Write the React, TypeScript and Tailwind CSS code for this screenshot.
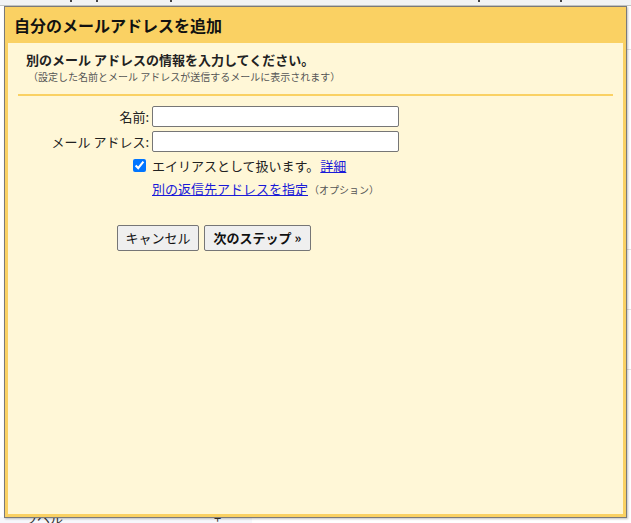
import React from 'react';

const font = { fontFamily: '"Noto Sans CJK JP", "Noto Sans", sans-serif' };

const Backdrop: React.FC = () => (
  <>
    <div className="absolute left-0 top-0 w-full h-[6px] bg-[#f1f3f4] border-b border-[#c4c7c5]">
      <span className="absolute left-[70px] top-[-2px] w-[2px] h-[4px] bg-[#444]" />
      <span className="absolute left-[96px] top-[-2px] w-[2px] h-[4px] bg-[#444]" />
      <span className="absolute left-[170px] top-[-2px] w-[2px] h-[4px] bg-[#444]" />
      <span className="absolute left-[478px] top-[-2px] w-[2px] h-[4px] bg-[#444]" />
      <span className="absolute left-[560px] top-[-2px] w-[2px] h-[4px] bg-[#444]" />
    </div>
    <div className="absolute right-0 top-[6px] w-[5px] h-[517px] bg-white">
      <div className="h-[44px] border-b border-[#e3e3e3]" />
      <div className="h-[200px] border-b border-[#e3e3e3]" />
      <div className="h-[60px] border-b border-[#e3e3e3]" />
      <div className="h-[60px] border-b border-[#e3e3e3]" />
    </div>
    <div className="absolute left-0 bottom-0 w-full h-[6px] bg-white">
      <div className="absolute left-0 top-0 w-[252px] h-full bg-[#f6f8fc]" />
      <span className="absolute left-[24px] top-[-6px] text-[13px] text-[#333] leading-none">ラベル</span>
      <span className="absolute left-[214px] top-[-6px] text-[13px] text-[#333] leading-none">+</span>
    </div>
  </>
);

export default function App() {
  return (
    <div className="relative w-[631px] h-[523px] bg-white overflow-hidden" style={font}>
      <Backdrop />
      <div className="absolute left-[4px] top-[6px] w-[623px] h-[512px] border border-[#7a7a7a] bg-[#fad163] flex flex-col pl-[3px] pr-[3px] pb-[3px] shadow-[1px_1px_2px_rgba(0,0,0,0.25)]">
        <div className="h-[36px] flex items-center pl-[6px] pb-[1px]">
          <h1 className="text-[16px] font-bold text-[#111] leading-none">自分のメールアドレスを追加</h1>
        </div>
        <div className="flex-1 bg-[#fff7d7] flex flex-col">
          <div className="pl-[18px] pt-[8px]">
            <p className="text-[13px] font-bold text-[#222] leading-[18px]">別のメール アドレスの情報を入力してください。</p>
            <p className="text-[10px] text-[#555] leading-[14px] mt-[1px] pl-[2px]">（設定した名前とメール アドレスが送信するメールに表示されます）</p>
          </div>
          <div className="mx-[10px] mt-[10px] h-[2px] bg-[#fad163]" />

          <div className="flex flex-col mt-[10px] text-[13px] text-[#222]">
            <div className="flex items-center h-[21px]">
              <label className="w-[141px] text-right leading-none">名前:</label>
              <input className="ml-[3px] w-[247px] h-[21px] bg-white border border-[#767676] rounded-[2px]" />
            </div>
            <div className="flex items-center h-[21px] mt-[4px]">
              <label className="w-[141px] text-right leading-none">メール アドレス:</label>
              <input className="ml-[3px] w-[247px] h-[21px] bg-white border border-[#767676] rounded-[2px]" />
            </div>
            <div className="flex items-center h-[18px] mt-[4px]">
              <div className="w-[141px] flex justify-end pr-[3px]">
                <input type="checkbox" defaultChecked className="w-[13px] h-[13px] accent-[#0075ff] m-0" />
              </div>
              <span className="ml-[3px] leading-none">エイリアスとして扱います。</span>
              <a href="#" className="ml-[1px] text-[#1a1ad8] underline leading-none">詳細</a>
            </div>
            <div className="flex items-baseline mt-[6px] pl-[144px]">
              <a href="#" className="text-[#1a1ad8] underline leading-[18px]">別の返信先アドレスを指定</a>
              <span className="ml-[1px] text-[10px] text-[#555]">（オプション）</span>
            </div>
            <div className="flex gap-[5px] mt-[27px] pl-[109px]">
              <button className="w-[82px] h-[26px] bg-[#efefef] border border-[#767676] rounded-[2px] text-[13px] text-[#111]">キャンセル</button>
              <button className="w-[107px] h-[26px] bg-[#efefef] border border-[#767676] rounded-[2px] text-[13px] font-bold text-[#111]">次のステップ »</button>
            </div>
          </div>
        </div>
      </div>
    </div>
  );
}
